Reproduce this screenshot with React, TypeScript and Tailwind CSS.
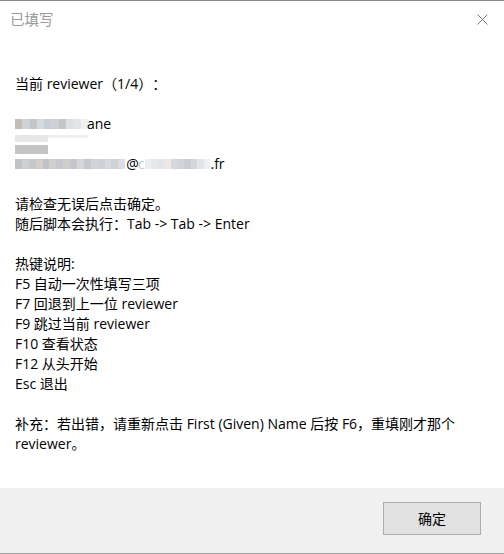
import React from "react";

const font = '"Open Sans", "Noto Sans CJK SC", sans-serif';

function Mosaic({ cells, w = 7, h = 10 }: { cells: string[][]; w?: number; h?: number }) {
  return (
    <span className="inline-flex flex-col">
      {cells.map((row, i) => (
        <span key={i} className="flex">
          {row.map((c, j) => (
            <span key={j} style={{ width: w, height: h, background: c }} />
          ))}
        </span>
      ))}
    </span>
  );
}

const nameCells = [
  ["#c5bcb8", "#cfd3d8", "#c2c5ca", "#d6dadf", "#c6cfd9", "#cdd0d5", "#c3c6cb", "#dcdfe3", "#e2e4e7", "#eef0f1"],
];

const emailCells = [
  ["#c2c2c4", "#cbd0d6", "#c6c8ca", "#d2cec9", "#c1c2c9", "#d0cece", "#c6c8cf", "#d0cec8", "#c8c5cd", "#d4d6da", "#c6c8ce", "#d2d4d9", "#cdd0d6", "#d7d9dc", "#d0d2d6", "#dadde2"],
];

const emailCells2 = [
  ["#eceef0", "#e6e8eb", "#e2e4e8", "#ebe8e4", "#d6d8dc", "#d0d3d7", "#c9ccd2", "#d3d7dc", "#e1e5ea", "#eef0f2"],
];

export default function App() {
  return (
    <div
      className="w-[504px] h-[554px] flex flex-col bg-white border-t border-b border-t-[#8a8a8a] border-b-[#9c9c9c] text-[14px] text-[#000] overflow-hidden [text-spacing-trim:space-all]"
      style={{ fontFamily: font }}
    >
      <div className="h-[37px] flex items-center justify-between pl-[10px] pr-[16px]">
        <span className="text-[#9a9a9a] text-[14.5px] leading-none" style={{ fontFamily: '"Noto Sans CJK SC", sans-serif' }}>已填写</span>
        <svg width="11" height="11" viewBox="0 0 11 11" className="block">
          <path d="M0.5 0.5 L10.5 10.5 M10.5 0.5 L0.5 10.5" stroke="#7a7a7a" strokeWidth="1" fill="none" />
        </svg>
      </div>
      <div className="flex-1 pt-[36px] px-[15px] leading-[20px]">
        <div>当前 reviewer（1/4）：</div>
        <div className="h-[20px]" />
        <div className="h-[20px] flex items-center">
          <Mosaic cells={nameCells} w={7.3} h={10} />
          <span className="-ml-[1px]">ane</span>
        </div>
        <div className="h-[20px] flex flex-col justify-center">
          <div className="flex">
            <span className="w-[33px] h-[7px] bg-[#e6e6e6]" />
            <span className="w-[40px] h-[3px] bg-[#eef1f4]" />
          </div>
          <span className="w-[33px] h-[3px]" />
          <span className="w-[33px] h-[9px] bg-[#c4c4c4]" />
        </div>
        <div className="h-[20px] flex items-center">
          <Mosaic cells={emailCells} w={6.9} h={10} />
          <span className="ml-[1px]">@</span>
          <span className="text-[#c8c8c8] -ml-[1px]">c</span>
          <Mosaic cells={emailCells2} w={6.6} h={10} />
          <span>.fr</span>
        </div>
        <div className="h-[20px]" />
        <div>请检查无误后点击确定。</div>
        <div>随后脚本会执行：Tab -&gt; Tab -&gt; Enter</div>
        <div className="h-[20px]" />
        <div>热键说明:</div>
        <div>F5 自动一次性填写三项</div>
        <div>F7 回退到上一位 reviewer</div>
        <div>F9 跳过当前 reviewer</div>
        <div>F10 查看状态</div>
        <div>F12 从头开始</div>
        <div>Esc 退出</div>
        <div className="h-[20px]" />
        <div className="w-[450px]">补充：若出错，请重新点击 First (Given) Name 后按 F6，重填刚才那个 reviewer。</div>
      </div>
      <div className="h-[65px] bg-[#f0f0f0] flex justify-end items-start pt-[14px] pr-[23px]">
        <button className="w-[98px] h-[33px] border border-[#adadad] bg-[#e1e1e1] text-[14px] text-black flex items-center justify-center">
          确定
        </button>
      </div>
    </div>
  );
}
